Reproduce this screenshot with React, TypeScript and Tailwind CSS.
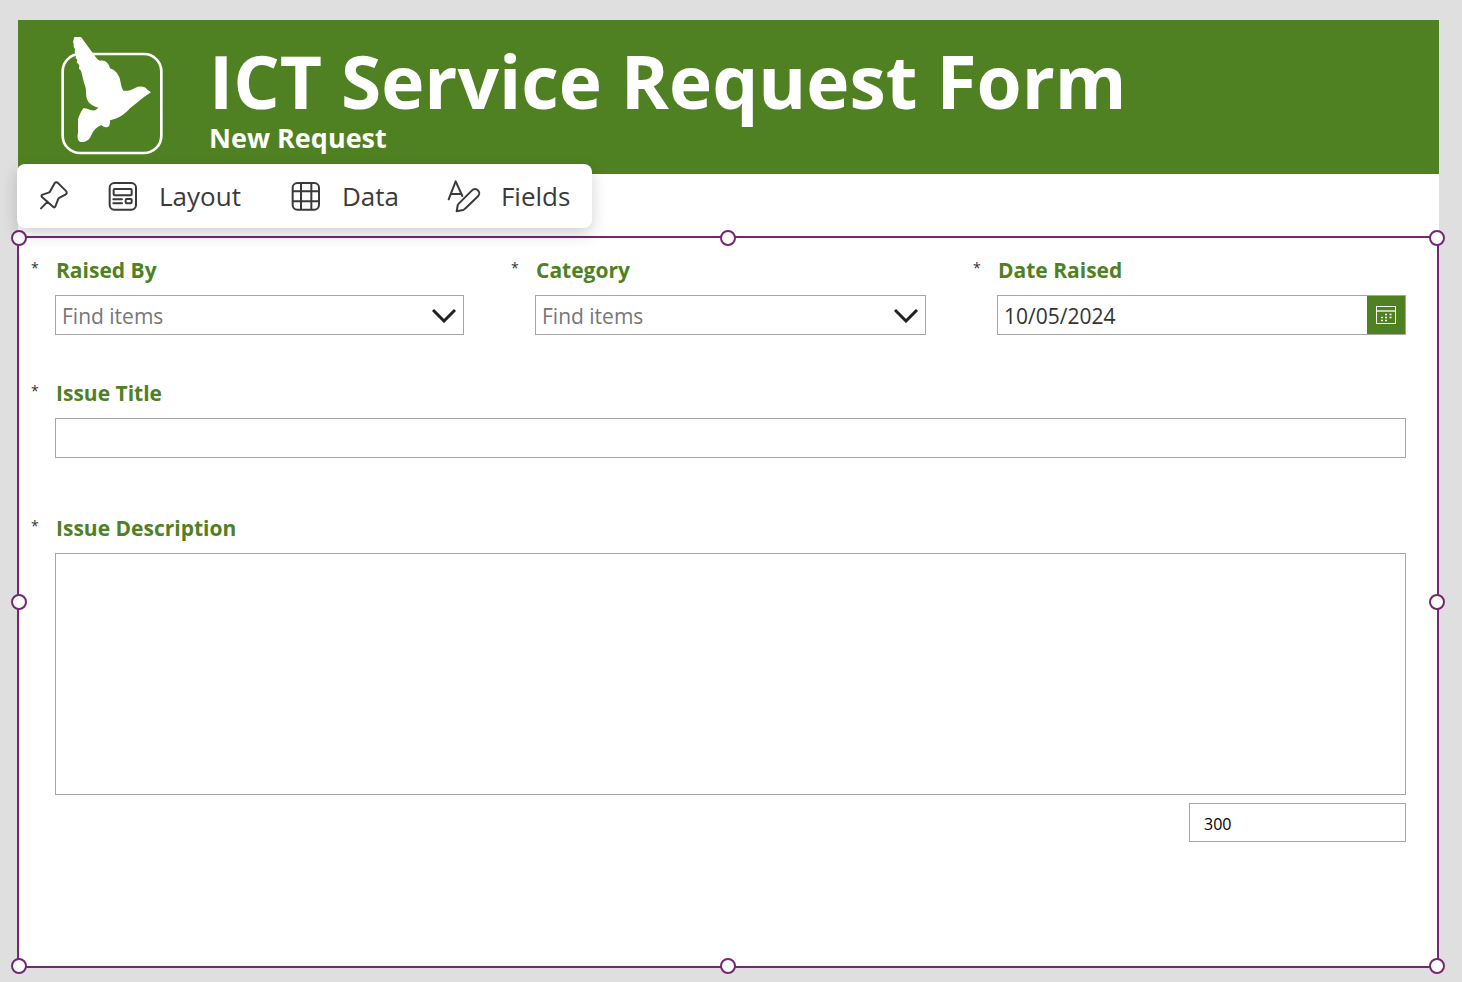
import React, { useState } from "react";

const inputBorder = "border border-[#a6a6a6] bg-white outline-none";

const handlePositions = [
  "left-0 top-0",
  "left-1/2 top-0",
  "left-full top-0",
  "left-0 top-1/2",
  "left-full top-1/2",
  "left-0 top-full",
  "left-1/2 top-full",
  "left-full top-full",
];

const Logo: React.FC = () => (
  <svg viewBox="60 48 309 360" className="h-[120px] w-[103px] shrink-0" fill="none">
    <rect x="68" y="102" width="296" height="297" rx="52" stroke="white" strokeWidth="8" />
    <path
      fill="white"
      d="M103 51H123L128 58L150 88L167 111Q172 119 179 122Q196 120 202 129Q209 136 210 145Q222 148 231 159Q240 172 242 188Q244 204 250 212C261 214 273 211 285 204C300 197 315 199 322 209L333 217L313 230L270 265C254 284 232 297 210 301Q212 307 209 312Q209 320 203 321C195 323 189 320 184 315C170 321 160 331 153 347C149 359 137 367 123 366C113 364 111 352 114 338V298C118 285 123 274 129 266C136 263 141 268 150 269C161 273 171 272 174 262C158 260 147 251 141 238C137 226 139 215 137 204L132 188L123 152L117 146L118 136L110 127L112 119L107 114L108 102L104 97L105 87L101 81V72L99 66Z"
    />
  </svg>
);

const PinIcon: React.FC = () => (
  <svg viewBox="0 0 90 90" className="size-[30px]" fill="none" stroke="currentColor" strokeWidth="6" strokeLinecap="round" strokeLinejoin="round">
    <path d="M6 82L26 62M8 47Q6 43 11 41L29 35Q32 34 34 30L46 8Q51 0 58 7L80 29Q87 36 79 41L62 50Q58 52 57 56L49 76Q47 81 43 78Z" />
  </svg>
);

const LayoutIcon: React.FC = () => (
  <svg viewBox="0 0 90 90" className="size-[30px]" fill="none" stroke="currentColor" strokeWidth="6" strokeLinecap="round">
    <rect x="5" y="6" width="79" height="80" rx="14" />
    <rect x="17" y="24" width="54" height="19" rx="3" />
    <path d="M16 55H42M16 67H42" />
    <rect x="53" y="54" width="18" height="13" rx="3" />
  </svg>
);

const DataIcon: React.FC = () => (
  <svg viewBox="0 0 90 90" className="size-[30px]" fill="none" stroke="currentColor" strokeWidth="6">
    <rect x="5" y="6" width="79" height="80" rx="14" />
    <path d="M30 6V86M61 6V86M5 31H84M5 61H84" />
  </svg>
);

const FieldsIcon: React.FC = () => (
  <svg viewBox="0 0 102 99" className="h-[33px] w-[34px]" fill="none" stroke="currentColor" strokeWidth="6" strokeLinecap="round" strokeLinejoin="round">
    <path d="M5 58L26 4L46 48M12 42H39" />
    <path d="M29 94L32 76Q33 73 36 70L75 31A12 12 0 0 1 93 49L54 86Q51 89 48 90Z" />
  </svg>
);

const CalendarIcon: React.FC = () => (
  <svg viewBox="0 0 20 18" className="h-[18px] w-5" fill="none" stroke="white">
    <rect x="0.5" y="0.5" width="19" height="17" />
    <path d="M1 5H19" strokeWidth="1.3" />
    <path d="M9 8.5H11M13.5 8.5H15.5M5 11.5H7M9 11.5H11M13.5 11.5H15.5M5 14.5H7M9 14.5H11" strokeWidth="1.5" />
  </svg>
);

interface FieldProps {
  id: string;
  label: string;
  className?: string;
  children: React.ReactNode;
}

const Field: React.FC<FieldProps> = ({ id, label, className = "", children }) => (
  <div className={`flex flex-col ${className}`}>
    <div className="mb-[13px] flex h-6 items-start">
      <span className="w-[37px] pl-3 text-[14px] leading-5 text-[#333]">*</span>
      <label htmlFor={id} className="text-[21px] leading-6 font-bold text-[#4f8122]">
        {label}
      </label>
    </div>
    <div className="flex flex-col pl-9">{children}</div>
  </div>
);

const ComboBox: React.FC<{ id: string }> = ({ id }) => (
  <div className="relative">
    <select
      id={id}
      defaultValue=""
      className={`h-10 w-full appearance-none pt-1 pl-1.5 text-[21px] text-[#767676] ${inputBorder}`}
    >
      <option value="">Find items</option>
    </select>
    <svg viewBox="0 0 24 14" className="pointer-events-none absolute top-3.5 right-2 h-3.5 w-6" fill="none" stroke="#212121" strokeWidth="3">
      <path d="M1 1L12 12L23 1" />
    </svg>
  </div>
);

const App: React.FC = () => {
  const [date, setDate] = useState("10/05/2024");
  const [title, setTitle] = useState("");
  const [description, setDescription] = useState("");

  return (
    <div className="min-h-screen bg-[#dfdfdf] pt-5 pr-[23px] pb-3.5 pl-[17px] font-['Open_Sans','Noto_Sans',sans-serif]">
      {/* Header */}
      <div className="relative">
        <header className="ml-px flex h-[154px] gap-[46px] bg-[#4f8122] pl-[42px] text-white">
          <div className="pt-4">
            <Logo />
          </div>
          <div className="pt-[22px]">
            <h1 className="text-[73px] leading-[78px] font-bold whitespace-nowrap">ICT Service Request Form</h1>
            <h2 className="text-[27px] leading-9 font-bold">New Request</h2>
          </div>
        </header>
        <div className="ml-px h-[62px] bg-white" />

        {/* Floating toolbar */}
        <div className="absolute top-36 left-0 z-10 flex h-16 items-center rounded-lg bg-white px-[22px] text-[26px] text-[#3b3a39] shadow-[0_6px_16px_rgba(0,0,0,0.18)]">
          <button aria-label="Pin" className="mr-[39px]">
            <PinIcon />
          </button>
          <button className="mr-[50px] flex items-center gap-[21px]">
            <LayoutIcon />
            Layout
          </button>
          <button className="mr-12 flex items-center gap-[21px]">
            <DataIcon />
            Data
          </button>
          <button className="flex items-center gap-5">
            <FieldsIcon />
            Fields
          </button>
        </div>
      </div>

      {/* Selected form */}
      <form className="relative border-2 border-[#742774] bg-white pt-5 pb-[124px]">
        <div className="grid grid-cols-[480fr_462fr_476fr]">
          <Field id="raisedBy" label="Raised By" className="pr-[35px]">
            <ComboBox id="raisedBy" />
          </Field>
          <Field id="category" label="Category" className="pr-[35px]">
            <ComboBox id="category" />
          </Field>
          <Field id="dateRaised" label="Date Raised" className="pr-[31px]">
            <div className={`flex h-10 ${inputBorder}`}>
              <input
                id="dateRaised"
                className="min-w-0 flex-1 pt-1 pl-1.5 text-[21px] text-[#333] outline-none"
                value={date}
                onChange={(e) => setDate(e.target.value)}
              />
              <button type="button" aria-label="Open calendar" className="flex w-[38px] items-center justify-center bg-[#4f8122]">
                <CalendarIcon />
              </button>
            </div>
          </Field>
        </div>

        <Field id="issueTitle" label="Issue Title" className="mt-[46px] pr-[31px]">
          <input
            id="issueTitle"
            className={`h-10 w-full px-1.5 text-[21px] ${inputBorder}`}
            value={title}
            onChange={(e) => setTitle(e.target.value)}
          />
        </Field>

        <Field id="issueDescription" label="Issue Description" className="mt-[58px] pr-[31px]">
          <textarea
            id="issueDescription"
            className={`h-[242px] w-full resize-none p-1.5 text-[21px] ${inputBorder}`}
            value={description}
            maxLength={300}
            onChange={(e) => setDescription(e.target.value)}
          />
          {/* Characters left */}
          <input
            aria-label="Characters left"
            readOnly
            className={`mt-2 h-[39px] w-[217px] self-end pt-0.5 pl-3.5 text-[16px] text-black ${inputBorder}`}
            value={300 - description.length}
          />
        </Field>

        {/* Resize handles */}
        {handlePositions.map((pos) => (
          <span
            key={pos}
            className={`absolute size-4 -translate-x-1/2 -translate-y-1/2 rounded-full border-2 border-[#742774] bg-white ${pos}`}
          />
        ))}
      </form>
    </div>
  );
};

export default App;
